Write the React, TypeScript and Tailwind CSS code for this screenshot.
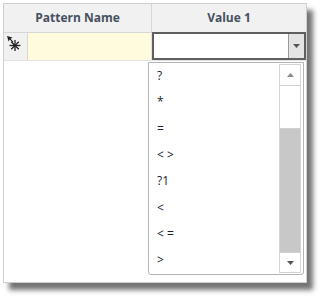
import React from 'react';

const operators = ['?', '*', '=', '< >', '?1', '<', '< =', '>'];

function NewRowIcon() {
  return (
    <svg width="16" height="17" viewBox="0 0 16 17">
      {/* small pointer */}
      <path d="M1 1 L6.5 2.6 L4.6 3.8 L7.4 6.8 L6.6 7.6 L3.8 4.6 L2.6 6.5 Z" fill="#222" />
      {/* asterisk */}
      <g stroke="#222" strokeWidth="1.3">
        <line x1="9" y1="5" x2="9" y2="16" />
        <line x1="3.5" y1="10.5" x2="14.5" y2="10.5" />
        <line x1="5.2" y1="6.7" x2="12.8" y2="14.3" />
        <line x1="12.8" y1="6.7" x2="5.2" y2="14.3" />
      </g>
    </svg>
  );
}

function Caret({ up = false }: { up?: boolean }) {
  return (
    <svg width="7" height="4" viewBox="0 0 7 4">
      <path d={up ? 'M0 4 L3.5 0 L7 4 Z' : 'M0 0 L7 0 L3.5 4 Z'} fill={up ? '#8a8a8a' : '#555'} />
    </svg>
  );
}

export default function App() {
  return (
    <div className="w-[324px] h-[298px] bg-white pt-[3px] pl-[3px] font-['Open_Sans','Noto_Sans',sans-serif]">
      <div className="relative w-[304px] h-[280px] bg-white border border-[#cfcfcf] shadow-[6px_7px_5px_rgba(0,0,0,0.55)]">
        {/* Header */}
        <div className="flex h-[29px] bg-[#f1f1f1] border-b border-[#d6d6d6]">
          <div className="w-[148px] flex items-center justify-center border-r border-[#d6d6d6] text-[12px] font-bold text-[#46505e]">
            Pattern Name
          </div>
          <div className="flex-1 flex items-center justify-center text-[12px] font-bold text-[#46505e]">
            Value 1
          </div>
        </div>

        {/* New row */}
        <div className="flex h-[28px] border-b border-[#e2e2e2]">
          <div className="w-[24px] bg-[#f1f1f1] border-r border-[#d6d6d6] flex items-start pl-[2px] pt-[2px]">
            <NewRowIcon />
          </div>
          <div className="w-[124px] bg-[#fffbdc] border-r border-[#e2e2e2]" />
          <div className="flex-1 flex border-2 border-[#5f5f5f] -mt-px bg-white">
            <div className="flex-1" />
            <div className="w-[16px] bg-[#e4e4e4] border-l border-[#9a9a9a] flex items-center justify-center">
              <Caret />
            </div>
          </div>
        </div>

        {/* Dropdown list */}
        <div className="absolute left-[144px] top-[58px] w-[156px] h-[213px] bg-white border border-[#b5b5b5] rounded-b-[3px] flex">
          <div className="flex-1 flex flex-col">
            {operators.map((op, idx) => (
              <div
                key={idx}
                className="h-[26.3px] flex items-center pl-[8px] text-[12px] text-[#1c1c2c] whitespace-pre"
              >
                {op}
              </div>
            ))}
          </div>
          {/* Scrollbar */}
          <div className="w-[22px] mt-[1px] mb-[1px] mr-[2px] border border-[#d4d4d4] flex flex-col">
            <div className="h-[21px] bg-white border-b border-[#d0d0d0] flex items-center justify-center">
              <Caret up />
            </div>
            <div className="h-[43px] bg-white border-b border-[#d0d0d0]" />
            <div className="flex-1 bg-[#c8c8c8]" />
            <div className="h-[20px] bg-white border-t border-[#d0d0d0] flex items-center justify-center">
              <Caret />
            </div>
          </div>
        </div>
      </div>
    </div>
  );
}
